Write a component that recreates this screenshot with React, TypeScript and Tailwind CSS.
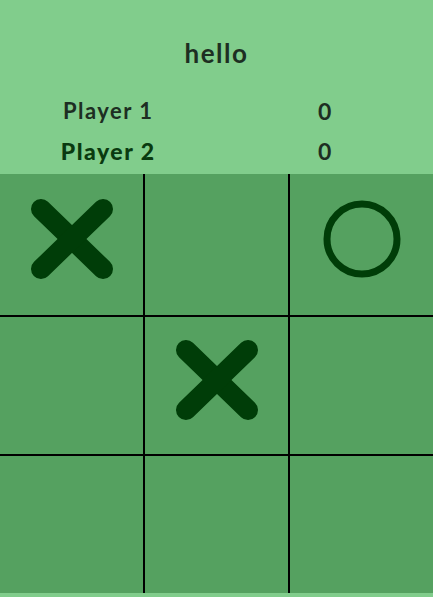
const FONT = { fontFamily: 'Lato, "Noto Sans", sans-serif' }

type Mark = 'X' | 'O' | null

const board: Mark[] = ['X', null, 'O', null, 'X', null, null, null, null]

function XMark() {
  return (
    <svg width="84" height="82" viewBox="0 0 84 82">
      <g stroke="#003d08" strokeWidth="20" strokeLinecap="round">
        <line x1="11" y1="11" x2="73" y2="71" />
        <line x1="73" y1="11" x2="11" y2="71" />
      </g>
    </svg>
  )
}

function OMark() {
  return (
    <svg width="80" height="80" viewBox="0 0 80 80">
      <circle cx="40" cy="40" r="35" fill="none" stroke="#003d08" strokeWidth="7" />
    </svg>
  )
}

export default function App() {
  return (
    <div className="w-[433px] h-[597px] bg-[#81cd8c] flex flex-col" style={FONT}>
      {/* Header */}
      <div className="h-[174px] flex flex-col items-center">
        <h1 className="mt-[40px] text-[26px] font-bold text-[#1d2e22] leading-none tracking-[1.5px]">hello</h1>
        <div className="mt-[31px] w-full grid grid-cols-2 text-center">
          <span className="text-[22px] font-bold text-[#1d2e22] leading-[28px] tracking-[1.5px]">Player 1</span>
          <span className="text-[23px] font-bold text-[#1d2e22] leading-[28px]">0</span>
          <span className="mt-[12px] text-[23px] font-black text-[#0a3a10] leading-[28px] tracking-[1.5px]">Player 2</span>
          <span className="mt-[12px] text-[23px] font-bold text-[#1d2e22] leading-[28px]">0</span>
        </div>
      </div>

      {/* Board */}
      <div className="grid grid-cols-3 grid-rows-[141px_137px_137px] gap-[2px] bg-black">
        {board.map((m, i) => (
          <div key={i} className="bg-[#55a160] flex items-center justify-center">
            <div className="mb-[12px]">
              {m === 'X' && <XMark />}
              {m === 'O' && <OMark />}
            </div>
          </div>
        ))}
      </div>
    </div>
  )
}
